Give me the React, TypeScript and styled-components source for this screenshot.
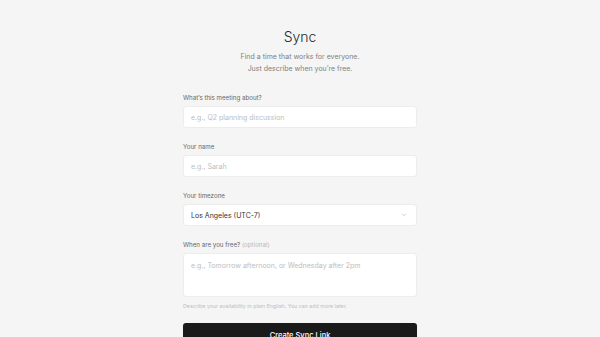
import React from 'react'
import styled, { createGlobalStyle } from 'styled-components'

const GlobalStyle = createGlobalStyle`
  html, body {
    margin: 0;
    padding: 0;
    background: #f5f5f5;
    font-family: Inter, "Noto Sans", sans-serif;
    color: #1a1a1a;
    -webkit-font-smoothing: antialiased;
  }
  * { box-sizing: border-box; }
`

const Page = styled.div`
  display: flex;
  justify-content: center;
  padding-top: 28px;
`

const Form = styled.div`
  width: 234px;
  display: flex;
  flex-direction: column;
`

const Header = styled.div`
  display: flex;
  flex-direction: column;
  align-items: center;
  margin-bottom: 18px;
`

const Title = styled.h1`
  margin: 0;
  font-size: 14px;
  line-height: 18px;
  font-weight: 300;
  color: #2a2a2a;
`

const Subtitle = styled.p`
  margin: 5px 0 0;
  font-size: 7px;
  line-height: 12px;
  color: #808080;
  text-align: center;
`

const Field = styled.div`
  display: flex;
  flex-direction: column;
  margin-bottom: 14px;
`

const Label = styled.label`
  font-size: 6.2px;
  line-height: 10px;
  color: #666;
  margin-bottom: 3px;
`

const Optional = styled.span`
  color: #b8b8b8;
`

const Input = styled.div<{ $tall?: boolean }>`
  height: ${(p) => (p.$tall ? '44px' : '22px')};
  background: #fff;
  border: 1px solid #ededed;
  border-radius: 3px;
  display: flex;
  align-items: ${(p) => (p.$tall ? 'flex-start' : 'center')};
  padding: ${(p) => (p.$tall ? '7px 7px' : '0 7px')};
  font-size: 7px;
  line-height: 9px;
  color: #bdbdbd;
`

const Select = styled(Input)`
  justify-content: space-between;
  color: #333;
  padding-right: 9px;
`

const Hint = styled.p`
  margin: -9px 0 13px;
  font-size: 5.3px;
  line-height: 8px;
  color: #c0c0c0;
`

const Button = styled.button`
  height: 24px;
  border: none;
  border-radius: 3px;
  background: #1a1a1a;
  color: #fff;
  font-family: inherit;
  font-size: 7.5px;
  font-weight: 500;
  padding-top: 2px;
`

const Chevron = () => (
  <svg width="6" height="6" viewBox="0 0 24 24" fill="none" stroke="#b0b0b0" strokeWidth="2.5" strokeLinecap="round" strokeLinejoin="round">
    <path d="m6 9 6 6 6-6" />
  </svg>
)

const App: React.FC = () => (
  <>
    <GlobalStyle />
    <Page>
      <Form>
        <Header>
          <Title>Sync</Title>
          <Subtitle>
            Find a time that works for everyone.
            <br />
            Just describe when you’re free.
          </Subtitle>
        </Header>
        <Field>
          <Label>What’s this meeting about?</Label>
          <Input>e.g., Q2 planning discussion</Input>
        </Field>
        <Field>
          <Label>Your name</Label>
          <Input>e.g., Sarah</Input>
        </Field>
        <Field>
          <Label>Your timezone</Label>
          <Select>
            Los Angeles (UTC-7)
            <Chevron />
          </Select>
        </Field>
        <Field>
          <Label>
            When are you free? <Optional>(optional)</Optional>
          </Label>
          <Input $tall>e.g., Tomorrow afternoon, or Wednesday after 2pm</Input>
        </Field>
        <Hint>Describe your availability in plain English. You can add more later.</Hint>
        <Button>Create Sync Link</Button>
      </Form>
    </Page>
  </>
)

export default App
